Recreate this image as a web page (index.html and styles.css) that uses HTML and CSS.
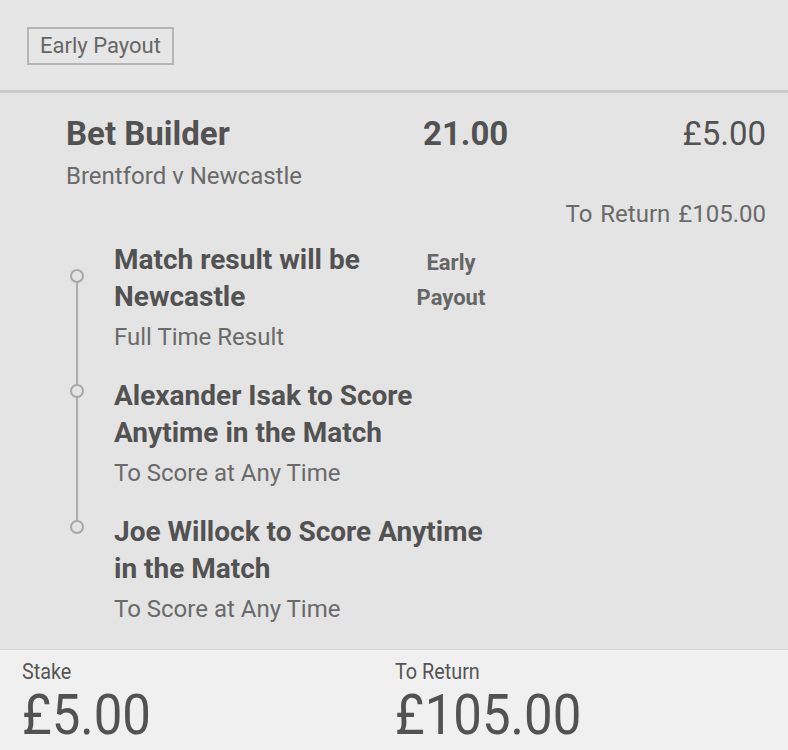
FILE: index.html
```html
<!DOCTYPE html>
<html>
  <head>
    <meta charset="utf-8">
    <meta name="viewport" content="width=device-width, initial-scale=1.0">
    <title>Bet Slip</title>
    <link rel="stylesheet" href="styles.css">
  </head>
  <body>
    <!-- 顶部提示 -->
    <div class="top-bar">
      <span class="badge">Early Payout</span>
    </div>

    <!-- 投注详情 -->
    <div class="bet">
      <div class="bet-head">
        <div class="bet-title">Bet Builder</div>
        <div class="bet-odds">21.00</div>
        <div class="bet-stake">£5.00</div>
      </div>
      <div class="bet-event">Brentford v Newcastle</div>
      <div class="bet-return">To Return £105.00</div>

      <div class="legs">
        <div class="leg leg-first">
          <div class="leg-body">
            <div class="leg-title">Match result will be Newcastle</div>
            <div class="leg-market">Full Time Result</div>
          </div>
          <div class="leg-flag">Early Payout</div>
        </div>
        <div class="leg">
          <div class="leg-body">
            <div class="leg-title">Alexander Isak to Score Anytime in the Match</div>
            <div class="leg-market">To Score at Any Time</div>
          </div>
        </div>
        <div class="leg leg-last">
          <div class="leg-body">
            <div class="leg-title">Joe Willock to Score Anytime in the Match</div>
            <div class="leg-market">To Score at Any Time</div>
          </div>
        </div>
      </div>
    </div>

    <!-- 底部汇总 -->
    <div class="summary">
      <div class="summary-item">
        <div class="summary-label">Stake</div>
        <div class="summary-value">£5.00</div>
      </div>
      <div class="summary-item">
        <div class="summary-label">To Return</div>
        <div class="summary-value">£105.00</div>
      </div>
    </div>
  </body>
</html>
```

FILE: styles.css
```css
body {
  margin: 0;
  background: #e4e4e4;
  font-family: Roboto, "Liberation Sans", sans-serif;
  color: #525252;
  height: 750px;
  overflow: hidden;
  display: flex;
  flex-direction: column;
}
/* 顶部提示 */
.top-bar {
  height: 94px;
  padding: 27px 0 0 27px;
  box-sizing: border-box;
  background: #e6e6e6;
  border-bottom: 3px solid #cacaca;
}
.badge {
  display: inline-block;
  border: 2px solid #b5b5b5;
  padding: 2px 11px;
  font-size: 22px;
  line-height: 30px;
  color: #666;
}
/* 投注详情 */
.bet {
  flex: 1;
  padding: 20px 22px 0 66px;
}
.bet-head {
  display: grid;
  grid-template-columns: 357px auto 1fr;
  align-items: center;
  height: 40px;
}
.bet-title {
  font-size: 33px;
  font-weight: bold;
}
.bet-odds {
  font-size: 33px;
  font-weight: bold;
}
.bet-stake {
  font-size: 33px;
  text-align: right;
}
.bet-event {
  font-size: 24px;
  line-height: 30px;
  margin-top: 8px;
  color: #6a6a6a;
}
.bet-return {
  font-size: 24px;
  line-height: 30px;
  margin-top: 8px;
  text-align: right;
  word-spacing: 2px;
  color: #6a6a6a;
}
/* 选项列表 */
.legs {
  position: relative;
  margin-top: 12px;
  width: 438px;
}
.legs::before {
  content: "";
  position: absolute;
  left: 10px;
  top: 36px;
  bottom: 95px;
  width: 2px;
  background: #adadad;
}
.leg {
  position: relative;
  display: flex;
  padding-left: 48px;
  margin-bottom: 25px;
}
.leg::before {
  content: "";
  position: absolute;
  left: 4px;
  top: 7px;
  width: 10px;
  height: 10px;
  border: 2px solid #a8a8a8;
  border-radius: 50%;
  background: #e4e4e4;
  z-index: 1;
}
.leg-first::before {
  top: 28px;
}
.leg-body {
  flex: 1;
}
.leg-title {
  font-size: 28px;
  line-height: 37px;
  font-weight: bold;
}
.leg-market {
  font-size: 24px;
  line-height: 30px;
  margin-top: 7px;
  color: #6a6a6a;
}
.leg-flag {
  width: 100px;
  margin-right: 3px;
  flex-shrink: 0;
  text-align: center;
  font-size: 22px;
  line-height: 35px;
  font-weight: bold;
  color: #666;
  padding-top: 4px;
}
/* 底部汇总 */
.summary {
  height: 102px;
  box-sizing: border-box;
  background: #f0f0f0;
  border-top: 1px solid #d6d6d6;
  display: flex;
  padding: 9px 0 0 22px;
}
.summary-item {
  width: 373px;
}
.summary-label {
  font-size: 22px;
  line-height: 26px;
  color: #555;
  transform: scaleX(0.9);
  transform-origin: left;
}
.summary-value {
  font-size: 56px;
  line-height: 60px;
  transform: scaleX(0.91);
  transform-origin: left;
}
```
